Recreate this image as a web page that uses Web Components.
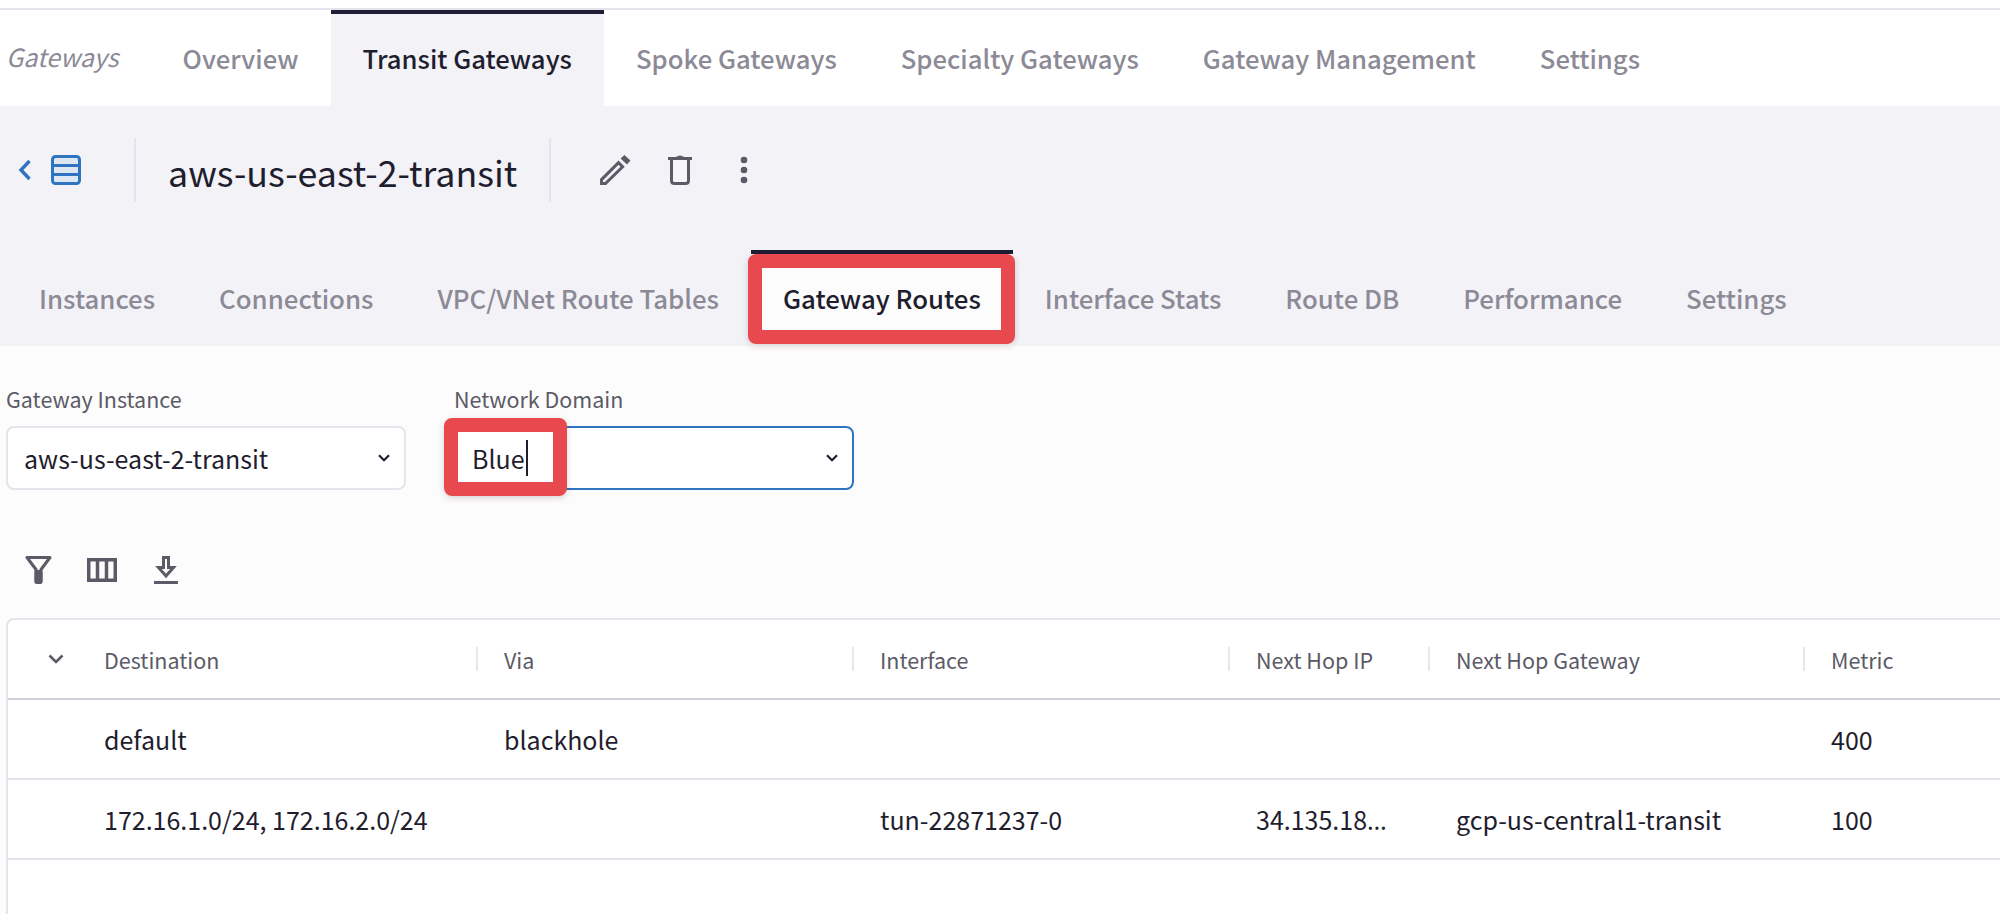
<!DOCTYPE html>
<html lang="en">
<head>
<meta charset="utf-8">
<title>Gateway Routes</title>
<style>
  html, body { margin: 0; height: 100%; }
  body {
    display: flex;
    flex-direction: column;
    height: 914px;
    overflow: hidden;
    background: #fff;
    font-family: "Noto Sans CJK SC", "Noto Sans", sans-serif;
    color: #1f1e2e;
  }
  /* place of the red note on the second select */
  #blue-mark { left: -12px; top: -10px; width: 123px; height: 78px; }
  /* place of the red note on the active sub tab */
  #tab-mark { left: -3px; right: -2px; top: 0; bottom: 2px; }
</style>
</head>
<body>
  <tab-bar variant="top">
    <span slot="label">Gateways</span>
    <tab-item>Overview</tab-item>
    <tab-item active>Transit Gateways</tab-item>
    <tab-item>Spoke Gateways</tab-item>
    <tab-item>Specialty Gateways</tab-item>
    <tab-item>Gateway Management</tab-item>
    <tab-item>Settings</tab-item>
  </tab-bar>

  <title-bar name="aws-us-east-2-transit"></title-bar>

  <tab-bar variant="sub">
    <tab-item>Instances</tab-item>
    <tab-item>Connections</tab-item>
    <tab-item>VPC/VNet Route Tables</tab-item>
    <tab-item active><red-mark id="tab-mark"></red-mark>Gateway Routes</tab-item>
    <tab-item>Interface Stats</tab-item>
    <tab-item>Route DB</tab-item>
    <tab-item>Performance</tab-item>
    <tab-item>Settings</tab-item>
  </tab-bar>

  <routes-panel>
    <field-select label="Gateway Instance" value="aws-us-east-2-transit"></field-select>
    <field-select label="Network Domain" value="Blue" focused>
      <red-mark id="blue-mark"></red-mark>
    </field-select>
  </routes-panel>

<script>
// Onglet simple : texte en slot, barre sombre quand il est actif
class TabItem extends HTMLElement {
  constructor() {
    super();
    this.attachShadow({ mode: "open" }).innerHTML = `
      <style>
        :host {
          position: relative;
          display: flex;
          align-items: center;
          box-sizing: border-box;
          height: 96px;
          padding: 0 32px 4px;
          border-top: 4px solid transparent;
          font-size: var(--tab-size);
          font-weight: 500;
          line-height: 32px;
          color: #8b8a96;
          white-space: nowrap;
        }
        :host([active]) {
          border-top-color: #1f1d36;
          background: var(--active-bg);
          color: #1f1e2e;
        }
      </style>
      <slot></slot>
    `;
  }
}
customElements.define("tab-item", TabItem);

// Barre d'onglets, en haut de page ou sous le titre
class TabBar extends HTMLElement {
  constructor() {
    super();
    this.attachShadow({ mode: "open" }).innerHTML = `
      <style>
        :host {
          display: flex;
          flex: none;
          align-items: stretch;
          --active-bg: #f2f2f7;
          --tab-size: 25.7px;
        }
        :host([variant="top"]) {
          margin-top: 8px;
          border-top: 2px solid #e4e4ec;
          background: #fff;
        }
        :host([variant="sub"]) {
          padding-left: 7px;
          background: #f2f2f7;
          --active-bg: #fcfcfc;
          --tab-size: 25.8px;
        }
        .label {
          display: flex;
          align-items: center;
          padding: 0 32px 4px 6px;
          font-size: 25px;
          font-style: italic;
          color: #8b8a96;
        }
        :host([variant="sub"]) .label { display: none; }
      </style>
      <div class="label"><slot name="label"></slot></div>
      <slot></slot>
    `;
  }
}
customElements.define("tab-bar", TabBar);

// Cadre rouge d'annotation posé par-dessus un élément
class RedMark extends HTMLElement {
  constructor() {
    super();
    this.attachShadow({ mode: "open" }).innerHTML = `
      <style>
        :host {
          position: absolute;
          box-sizing: border-box;
          border: 14px solid #e7494e;
          border-radius: 8px;
          box-shadow: 0 2px 6px rgba(60, 20, 20, 0.18);
          pointer-events: none;
        }
      </style>
    `;
  }
}
customElements.define("red-mark", RedMark);

// Ligne de titre avec retour, nom de la gateway et actions
class TitleBar extends HTMLElement {
  constructor() {
    super();
    this.attachShadow({ mode: "open" }).innerHTML = `
      <style>
        :host {
          display: flex;
          flex: none;
          align-items: center;
          box-sizing: border-box;
          height: 144px;
          padding: 32px 0 48px 18px;
          background: #f2f2f7;
        }
        svg { display: block; flex: none; }
        .sep { flex: none; width: 2px; height: 64px; background: #e4e4ec; }
        h1 {
          margin: 0;
          padding: 0 32px;
          font-size: 35.75px;
          font-weight: 400;
          line-height: 64px;
          color: #1f1e2e;
          position: relative;
          top: 2px;
        }
      </style>
      <svg width="14" height="22" viewBox="0 0 14 22" style="margin-right:19px">
        <path d="M11.5 2 L3 11 L11.5 20" fill="none" stroke="#2f74c0" stroke-width="3.4"/>
      </svg>
      <svg width="30" height="30" viewBox="0 0 30 30" style="margin-right:53px">
        <rect x="1.5" y="1.5" width="27" height="27" rx="3" fill="#dfe7f2" stroke="#2f74c0" stroke-width="3"/>
        <path d="M1.5 10.5 H28.5 M1.5 19.5 H28.5" stroke="#2f74c0" stroke-width="3"/>
      </svg>
      <div class="sep"></div>
      <h1></h1>
      <div class="sep"></div>
      <svg width="31" height="30" viewBox="0 0 31 30" style="margin-left:49px">
        <path d="M1.5 24.6 L18.5 7.6 L22.6 11.7 L5.5 28.5 H1.5 Z" fill="none" stroke="#5b5a66" stroke-width="3"/>
        <path d="M20.6 3.6 L24.4 0 L30.4 5.6 L27 9.6 Z" fill="#5b5a66"/>
      </svg>
      <svg width="24" height="30" viewBox="0 0 24 30" style="margin-left:37px">
        <path d="M0 5 V2 H8 Q12 -1 16 2 H24 V5 Z" fill="#5b5a66"/>
        <path d="M3.5 5 V25.5 Q3.5 28.5 6.5 28.5 H17.5 Q20.5 28.5 20.5 25.5 V5" fill="#f6f6f9" stroke="#5b5a66" stroke-width="3"/>
      </svg>
      <svg width="8" height="30" viewBox="0 0 8 30" style="margin-left:48px">
        <circle cx="4" cy="5" r="3.3" fill="#5b5a66"/>
        <circle cx="4" cy="15" r="3.3" fill="#5b5a66"/>
        <circle cx="4" cy="25" r="3.3" fill="#5b5a66"/>
      </svg>
    `;
  }

  connectedCallback() {
    this.shadowRoot.querySelector("h1").textContent = this.getAttribute("name");
  }
}
customElements.define("title-bar", TitleBar);

// Champ de sélection avec libellé et petite flèche
class FieldSelect extends HTMLElement {
  constructor() {
    super();
    this.attachShadow({ mode: "open" }).innerHTML = `
      <style>
        :host { display: block; flex: none; width: 400px; }
        label {
          display: block;
          height: 32px;
          margin-bottom: 11px;
          font-size: 21.5px;
          line-height: 32px;
          color: #5b5a66;
        }
        .box {
          position: relative;
          display: flex;
          align-items: center;
          justify-content: space-between;
          box-sizing: border-box;
          height: 64px;
          padding: 0 14px 0 16px;
          border: 2px solid #e4e4ec;
          border-radius: 8px;
          background: #fff;
          font-size: 25px;
          color: #1f1e2e;
        }
        :host([focused]) .box { border-color: #2f74c0; }
        .caret {
          display: none;
          width: 2px;
          height: 36px;
          margin-left: 1px;
          background: #1f1e2e;
        }
        :host([focused]) .caret { display: block; }
        .value { display: flex; align-items: center; }
        svg { display: block; flex: none; }
      </style>
      <label></label>
      <div class="box">
        <div class="value"><span class="text"></span><span class="caret"></span></div>
        <svg width="12" height="8" viewBox="0 0 12 8">
          <path d="M1 1.2 L6 6.2 L11 1.2" fill="none" stroke="#1f1e2e" stroke-width="2.2"/>
        </svg>
        <slot></slot>
      </div>
    `;
  }

  connectedCallback() {
    this.shadowRoot.querySelector("label").textContent = this.getAttribute("label");
    this.shadowRoot.querySelector(".text").textContent = this.getAttribute("value");
  }
}
customElements.define("field-select", FieldSelect);

// Tableau des routes, les lignes viennent d'une liste
const routeColumns = ["Destination", "Via", "Interface", "Next Hop IP", "Next Hop Gateway", "Metric"];
const routeRows = [
  ["default", "blackhole", "", "", "", "400"],
  ["172.16.1.0/24, 172.16.2.0/24", "", "tun-22871237-0", '34.135.18<span class="dots">…</span>', "gcp-us-central1-transit", "100"],
];

class RouteTable extends HTMLElement {
  constructor() {
    super();
    let head = routeColumns.map(function (name, i) {
      return `<div class="th ${i === 0 ? "first" : ""}"><span>${name}</span></div>`;
    }).join("");
    let rows = routeRows.map(function (row) {
      let cells = row.map(function (value) {
        return `<div class="td"><div>${value}</div></div>`;
      }).join("");
      return `<div class="row"><div class="td"></div>${cells}</div>`;
    }).join("");

    this.attachShadow({ mode: "open" }).innerHTML = `
      <style>
        :host {
          display: block;
          flex: 1;
          margin-left: 6px;
          border-top: 2px solid #e4e4ec;
          border-left: 2px solid #e4e4ec;
          border-top-left-radius: 8px;
          background: #fff;
        }
        .row {
          display: grid;
          grid-template-columns: 68px 400px 376px 376px 200px 375px 1fr;
          height: 80px;
          border-bottom: 2px solid #e4e4ec;
          box-sizing: border-box;
        }
        .row.head { border-bottom-color: #d0d0da; }
        .th, .chev { display: flex; align-items: center; }
        .chev { justify-content: flex-start; padding-left: 40px; }
        .th {
          font-size: 21.5px;
          color: #5b5a66;
        }
        .th span {
          display: flex;
          align-items: center;
          height: 24px;
          padding-left: 26px;
          border-left: 2px solid #e6e6ee;
        }
        .th.first span { padding-left: 28px; border-left: 0; }
        .td {
          display: flex;
          align-items: center;
          padding-left: 28px;
          font-size: 25px;
          color: #1f1e2e;
          white-space: nowrap;
        }
        .dots { font-family: "Noto Sans", sans-serif; letter-spacing: 6px; }
        svg { display: block; }
      </style>
      <div class="row head">
        <div class="chev">
          <svg width="16" height="10" viewBox="0 0 16 10">
            <path d="M1.5 1.5 L8 8 L14.5 1.5" fill="none" stroke="#5b5a66" stroke-width="2.6"/>
          </svg>
        </div>
        ${head}
      </div>
      ${rows}
    `;
  }
}
customElements.define("route-table", RouteTable);

// Panneau du bas : filtres, barre d'outils et tableau
class RoutesPanel extends HTMLElement {
  constructor() {
    super();
    this.attachShadow({ mode: "open" }).innerHTML = `
      <style>
        :host {
          display: flex;
          flex-direction: column;
          flex: 1;
          min-height: 0;
          padding-top: 37px;
          background: #fcfcfc;
        }
        .filters { display: flex; gap: 48px; padding-left: 6px; }
        .tools {
          display: flex;
          align-items: center;
          height: 30px;
          margin: 65px 0 33px 25px;
        }
        svg { display: block; flex: none; }
      </style>
      <div class="filters"><slot></slot></div>
      <div class="tools">
        <svg width="27" height="28" viewBox="0 0 27 28">
          <path d="M2 1.5 H25 L16 13.5 V26 Q13.5 28 11 26 V13.5 Z" fill="none" stroke="#5b5a66" stroke-width="3" stroke-linejoin="round"/>
          <rect x="9.5" y="14" width="8" height="13.5" rx="2" fill="#5b5a66"/>
        </svg>
        <svg width="30" height="24" viewBox="0 0 30 24" style="margin-left:35px">
          <rect x="1.75" y="1.75" width="26.5" height="20.5" fill="none" stroke="#5b5a66" stroke-width="3.5"/>
          <path d="M10.5 1.5 V22.5 M19.5 1.5 V22.5" stroke="#5b5a66" stroke-width="3.5"/>
        </svg>
        <svg width="24" height="28" viewBox="0 0 24 28" style="margin-left:37px">
          <path d="M9.5 1.5 H14.5 V11.5 H19.5 L12 20 L4.5 11.5 H9.5 Z" fill="none" stroke="#5b5a66" stroke-width="3"/>
          <rect x="0" y="25" width="24" height="3" fill="#5b5a66"/>
        </svg>
      </div>
      <route-table></route-table>
    `;
  }
}
customElements.define("routes-panel", RoutesPanel);
</script>
</body>
</html>
